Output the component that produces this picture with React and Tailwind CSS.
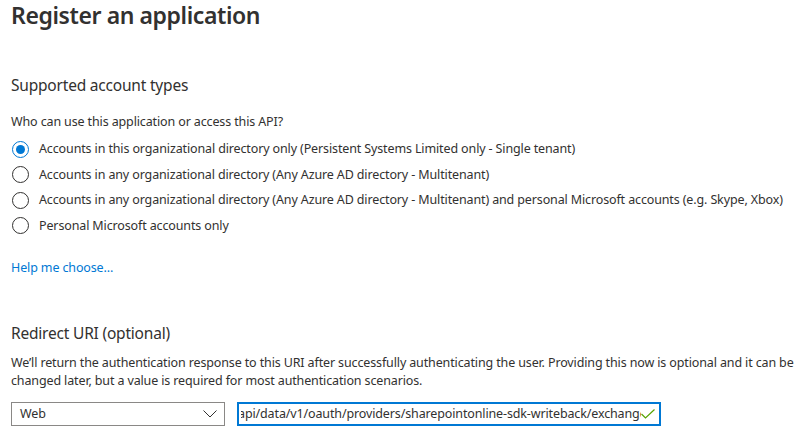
const OPTIONS = [
  'Accounts in this organizational directory only (Persistent Systems Limited only - Single tenant)',
  'Accounts in any organizational directory (Any Azure AD directory - Multitenant)',
  'Accounts in any organizational directory (Any Azure AD directory - Multitenant) and personal Microsoft accounts (e.g. Skype, Xbox)',
  'Personal Microsoft accounts only',
];

function Radio({ checked }) {
  return (
    <span
      className={[
        'w-[17px] h-[17px] rounded-full border flex items-center justify-center shrink-0',
        checked ? 'border-[#0078d4]' : 'border-[#323130]',
      ].join(' ')}
    >
      {checked && <span className="w-[9px] h-[9px] rounded-full bg-[#0078d4]" />}
    </span>
  );
}

export default function App() {
  return (
    <div
      className="w-[809px] h-[429px] overflow-hidden bg-white text-[#323130] px-[11px] text-[12.5px] leading-[18px] tracking-[-0.13px]"
      style={{ fontFamily: '"Segoe UI", "Noto Sans", sans-serif' }}
    >
      <h1 className="text-[23px] leading-[30px] font-semibold tracking-[-0.4px]">Register an application</h1>

      <h2 className="mt-[44px] text-[15.5px] leading-[22px] tracking-[-0.2px]">Supported account types</h2>
      <p className="mt-[17px]">Who can use this application or access this API?</p>

      <div className="mt-[5.5px] flex flex-col">
        {OPTIONS.map((label, i) => (
          <label key={label} className="h-[25.5px] flex items-center gap-[10px] pl-[1px]">
            <Radio checked={i === 0} />
            <span className="whitespace-nowrap">{label}</span>
          </label>
        ))}
      </div>

      <a href="#" className="block mt-[20.5px] text-[#0078d4] w-fit">
        Help me choose...
      </a>

      <h2 className="mt-[45px] text-[15.5px] leading-[22px] tracking-[-0.2px]">Redirect URI (optional)</h2>
      <p className="mt-[10px] w-[790px]">
        We’ll return the authentication response to this URI after successfully authenticating the user. Providing this
        now is optional and it can be changed later, but a value is required for most authentication scenarios.
      </p>

      <div className="mt-[12px] flex items-center gap-[12px]">
        <div className="w-[214px] h-[24px] border border-[#8a8886] flex items-center justify-between pl-[8px] pr-[7px]">
          <span>Web</span>
          <svg width="14" height="8" viewBox="0 0 14 8" fill="none">
            <path d="M0.5 0.5 L7 7 L13.5 0.5" stroke="#323130" strokeWidth="1" />
          </svg>
        </div>
        <div className="w-[424px] h-[24px] border-2 border-[#0078d4] flex items-center pl-[2px] pr-[4px]">
          <div className="flex-1 overflow-hidden whitespace-nowrap">
            <span className="ml-[-3px]">api/data/v1/oauth/providers/sharepointonline-sdk-writeback/exchange</span>
          </div>
          <svg width="14" height="10" viewBox="0 0 14 10" fill="none" className="shrink-0">
            <path d="M0.5 5 L4.5 9 L13.5 0.5" stroke="#57a300" strokeWidth="1.2" />
          </svg>
        </div>
      </div>
    </div>
  );
}
